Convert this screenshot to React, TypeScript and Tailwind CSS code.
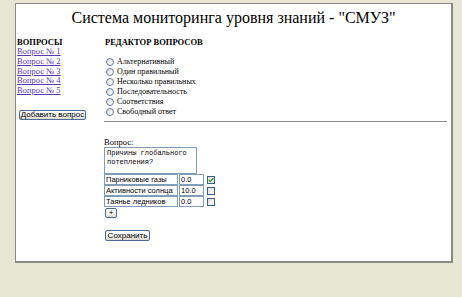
import React from "react";

const questions = ["Вопрос № 1", "Вопрос № 2", "Вопрос № 3", "Вопрос № 4", "Вопрос № 5"];
const types = [
  "Альтернативный",
  "Один правильный",
  "Несколько правильных",
  "Последовательность",
  "Соответствия",
  "Свободный ответ",
];
const answers = [
  { text: "Парниковые газы", value: "0.0", checked: true },
  { text: "Активности солнца", value: "10.0", checked: false },
  { text: "Таянье ледников", value: "0.0", checked: false },
];

function XpButton({ label, className }: { label: string; className: string }) {
  return (
    <div
      className={`flex items-center justify-center rounded-[2px] border border-[#4a6a94] bg-gradient-to-b from-white via-[#f4f4f0] to-[#dcdad0] font-['Liberation_Sans',sans-serif] text-[8px] leading-none text-black ${className}`}
    >
      {label}
    </div>
  );
}

function Radio() {
  return (
    <span className="h-[8px] w-[8px] shrink-0 rounded-full border border-[#5f7ea0] bg-gradient-to-br from-[#dcdcd6] to-white" />
  );
}

function Checkbox({ checked }: { checked: boolean }) {
  return (
    <span className="flex h-[8px] w-[8px] items-center justify-center border border-[#35618c] bg-gradient-to-br from-[#dedcd4] to-white">
      {checked && (
        <svg width="6" height="6" viewBox="0 0 6 6">
          <path d="M0.8 3 L2.4 4.6 L5.4 1" stroke="#21a121" strokeWidth="1.3" fill="none" />
        </svg>
      )}
    </span>
  );
}

export default function App() {
  return (
    <div className="h-[297px] w-[462px] bg-[#e7e5d4] pl-[15px] pt-[3px] font-['Liberation_Serif',serif]">
      <div className="flex h-[260px] w-[438px] flex-col border border-r-2 border-b-2 border-[#8a8a88] bg-white">
        <h1 className="mt-[4px] text-center font-['Liberation_Serif',serif] text-[16px] leading-[20px] text-black">
          Система мониторинга уровня знаний - "СМУЗ"
        </h1>
        <div className="mt-[9px] flex">
          <div className="flex w-[88px] flex-col pl-[1px]">
            <div className="text-[8.5px] font-bold leading-[10px]">ВОПРОСЫ</div>
            {questions.map((q) => (
              <a key={q} className="text-[8.5px] leading-[9.8px] text-[#5a37b4] underline">
                {q}
              </a>
            ))}
            <XpButton label="Добавить вопрос" className="mt-[14px] ml-[2px] h-[10px] w-[67px]" />
          </div>
          <div className="flex flex-1 flex-col">
            <div className="pl-[1px] text-[8.5px] font-bold leading-[10px]">РЕДАКТОР ВОПРОСОВ</div>
            <div className="mt-[10px] flex flex-col pl-[2px]">
              {types.map((t) => (
                <div key={t} className="flex h-[10px] items-center gap-[3px] text-[8px]">
                  <Radio />
                  <span>{t}</span>
                </div>
              ))}
            </div>
            <div className="mt-[4px] mr-[4px] border-t border-[#8a8a8a]" />
            <div className="mt-[15px] text-[8.5px] leading-[10px]">Вопрос:</div>
            <div className="h-[27px] w-[93px] border border-[#7f9db9] px-[2px] pt-[1px] font-['Liberation_Mono',monospace] text-[7px] leading-[9px]">
              Причины глобального потепления?
            </div>
            <div className="flex flex-col">
              {answers.map((a) => (
                <div key={a.text} className="flex h-[11px] items-center">
                  <div className="flex h-[11px] w-[74px] items-center border border-[#7f9db9] px-[1px] font-['Liberation_Sans',sans-serif] text-[7.5px]">
                    {a.text}
                  </div>
                  <div className="ml-[1px] flex h-[11px] w-[25px] items-center border border-[#7f9db9] px-[1px] font-['Liberation_Sans',sans-serif] text-[7.5px]">
                    {a.value}
                  </div>
                  <div className="ml-[3px]">
                    <Checkbox checked={a.checked} />
                  </div>
                </div>
              ))}
            </div>
            <XpButton label="+" className="mt-[1px] ml-[1px] h-[10px] w-[12px]" />
            <XpButton label="Сохранить" className="mt-[12px] ml-[1px] h-[11px] w-[45px]" />
          </div>
        </div>
      </div>
    </div>
  );
}
